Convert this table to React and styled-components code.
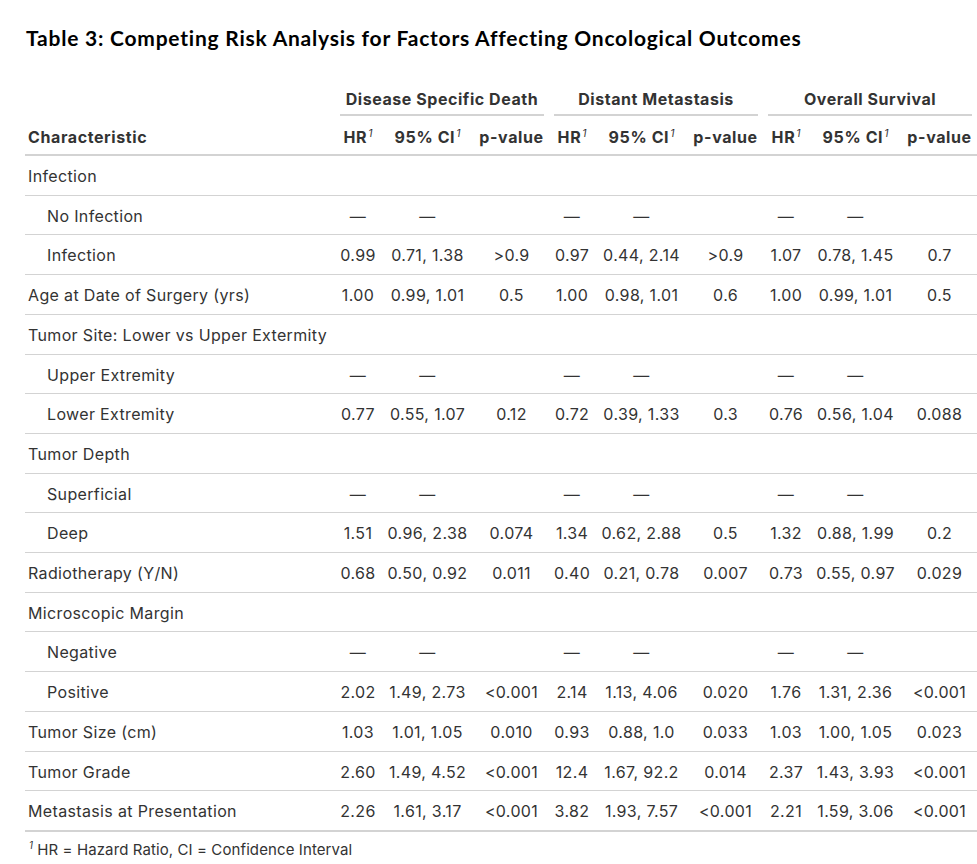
import React from 'react';
import styled, { createGlobalStyle } from 'styled-components';

const GlobalStyle = createGlobalStyle`
  body {
    margin: 0;
    background: #ffffff;
  }
`;

const groups = ['Disease Specific Death', 'Distant Metastasis', 'Overall Survival'];

const REF = ['—', '—', '', '—', '—', '', '—', '—', ''];

const rows = [
  { label: 'Infection' },
  { label: 'No Infection', sub: true, values: REF },
  {
    label: 'Infection',
    sub: true,
    values: ['0.99', '0.71, 1.38', '>0.9', '0.97', '0.44, 2.14', '>0.9', '1.07', '0.78, 1.45', '0.7']
  },
  {
    label: 'Age at Date of Surgery (yrs)',
    values: ['1.00', '0.99, 1.01', '0.5', '1.00', '0.98, 1.01', '0.6', '1.00', '0.99, 1.01', '0.5']
  },
  { label: 'Tumor Site: Lower vs Upper Extermity' },
  { label: 'Upper Extremity', sub: true, values: REF },
  {
    label: 'Lower Extremity',
    sub: true,
    values: ['0.77', '0.55, 1.07', '0.12', '0.72', '0.39, 1.33', '0.3', '0.76', '0.56, 1.04', '0.088']
  },
  { label: 'Tumor Depth' },
  { label: 'Superficial', sub: true, values: REF },
  {
    label: 'Deep',
    sub: true,
    values: ['1.51', '0.96, 2.38', '0.074', '1.34', '0.62, 2.88', '0.5', '1.32', '0.88, 1.99', '0.2']
  },
  {
    label: 'Radiotherapy (Y/N)',
    values: ['0.68', '0.50, 0.92', '0.011', '0.40', '0.21, 0.78', '0.007', '0.73', '0.55, 0.97', '0.029']
  },
  { label: 'Microscopic Margin' },
  { label: 'Negative', sub: true, values: REF },
  {
    label: 'Positive',
    sub: true,
    values: ['2.02', '1.49, 2.73', '<0.001', '2.14', '1.13, 4.06', '0.020', '1.76', '1.31, 2.36', '<0.001']
  },
  {
    label: 'Tumor Size (cm)',
    values: ['1.03', '1.01, 1.05', '0.010', '0.93', '0.88, 1.0', '0.033', '1.03', '1.00, 1.05', '0.023']
  },
  {
    label: 'Tumor Grade',
    values: ['2.60', '1.49, 4.52', '<0.001', '12.4', '1.67, 92.2', '0.014', '2.37', '1.43, 3.93', '<0.001']
  },
  {
    label: 'Metastasis at Presentation',
    values: ['2.26', '1.61, 3.17', '<0.001', '3.82', '1.93, 7.57', '<0.001', '2.21', '1.59, 3.06', '<0.001']
  }
];

const Fn = () => (
  <Sup>
    <i>1</i>
  </Sup>
);

export default function App() {
  return (
    <Page>
      <GlobalStyle />
      <Title>Table 3: Competing Risk Analysis for Factors Affecting Oncological Outcomes</Title>
      <Table>
        <colgroup>
          <col style={{ width: 310 }} />
          {groups.map(g => (
            <React.Fragment key={g}>
              <col style={{ width: 46 }} />
              <col style={{ width: 93 }} />
              <col style={{ width: 75 }} />
            </React.Fragment>
          ))}
        </colgroup>
        <thead>
          <tr>
            <SpannerCell />
            {groups.map(g => (
              <SpannerCell key={g} colSpan={3}>
                <SpannerLabel>{g}</SpannerLabel>
              </SpannerCell>
            ))}
          </tr>
          <tr>
            <HeadCell $left>Characteristic</HeadCell>
            {groups.map(g => (
              <React.Fragment key={g}>
                <HeadCell>
                  HR
                  <Fn />
                </HeadCell>
                <HeadCell>
                  95% CI
                  <Fn />
                </HeadCell>
                <HeadCell>p-value</HeadCell>
              </React.Fragment>
            ))}
          </tr>
        </thead>
        <tbody>
          {rows.map((r, i) => (
            <Row key={i} $first={i === 0}>
              <LabelCell $sub={r.sub}>{r.label}</LabelCell>
              {(r.values || Array(9).fill('')).map((v, j) => (
                <Cell key={j}>{v}</Cell>
              ))}
            </Row>
          ))}
        </tbody>
        <tfoot>
          <tr>
            <FootCell colSpan={10}>
              <Fn /> HR = Hazard Ratio, CI = Confidence Interval
            </FootCell>
          </tr>
        </tfoot>
      </Table>
    </Page>
  );
}

const Page = styled.div`
  padding: 26px 0 0 25px;
  font-family: Inter, 'Liberation Sans', sans-serif;
  color: #333333;
`;

const Title = styled.h2`
  margin: 0 0 30px 1px;
  font-family: Lato, 'Liberation Sans', sans-serif;
  font-weight: 700;
  font-size: 21px;
  letter-spacing: 0.77px;
  line-height: 24px;
  color: #000000;
`;

const Table = styled.table`
  width: 952px;
  table-layout: fixed;
  border-collapse: collapse;
  font-size: 16px;
  letter-spacing: 0.35px;
`;

const SpannerCell = styled.th`
  padding: 8px 5px 0;
  font-weight: 700;
  letter-spacing: 0.55px;
  text-align: center;
  line-height: 22px;
  vertical-align: bottom;
`;

const SpannerLabel = styled.span`
  display: block;
  padding-bottom: 4px;
  border-bottom: 2px solid #d3d3d3;
  white-space: nowrap;
`;

const HeadCell = styled.th`
  padding: 10px 3px 6px;
  font-weight: 700;
  letter-spacing: 0.6px;
  line-height: 22px;
  white-space: nowrap;
  text-align: ${p => (p.$left ? 'left' : 'center')};
  border-bottom: 2px solid #d3d3d3;
`;

const Sup = styled.sup`
  font-size: 65%;
  line-height: 0;
  font-weight: 400;
  letter-spacing: 0;
  margin-left: 1px;
`;

const Row = styled.tr`
  border-top: ${p => (p.$first ? 'none' : '1px solid #d3d3d3')};

  &:last-child {
    border-bottom: 2px solid #d3d3d3;
  }
`;

const LabelCell = styled.td`
  padding: 9px 5px 7px ${p => (p.$sub ? '22px' : '3px')};
  line-height: 22.7px;
  white-space: nowrap;
  text-align: left;
`;

const Cell = styled.td`
  padding: 9px 0 7px;
  line-height: 22.7px;
  white-space: nowrap;
  text-align: center;
`;

const FootCell = styled.td`
  padding: 8px 3px 0;
  font-size: 15px;
  letter-spacing: 0.1px;
  line-height: 20px;
  text-align: left;
`;
